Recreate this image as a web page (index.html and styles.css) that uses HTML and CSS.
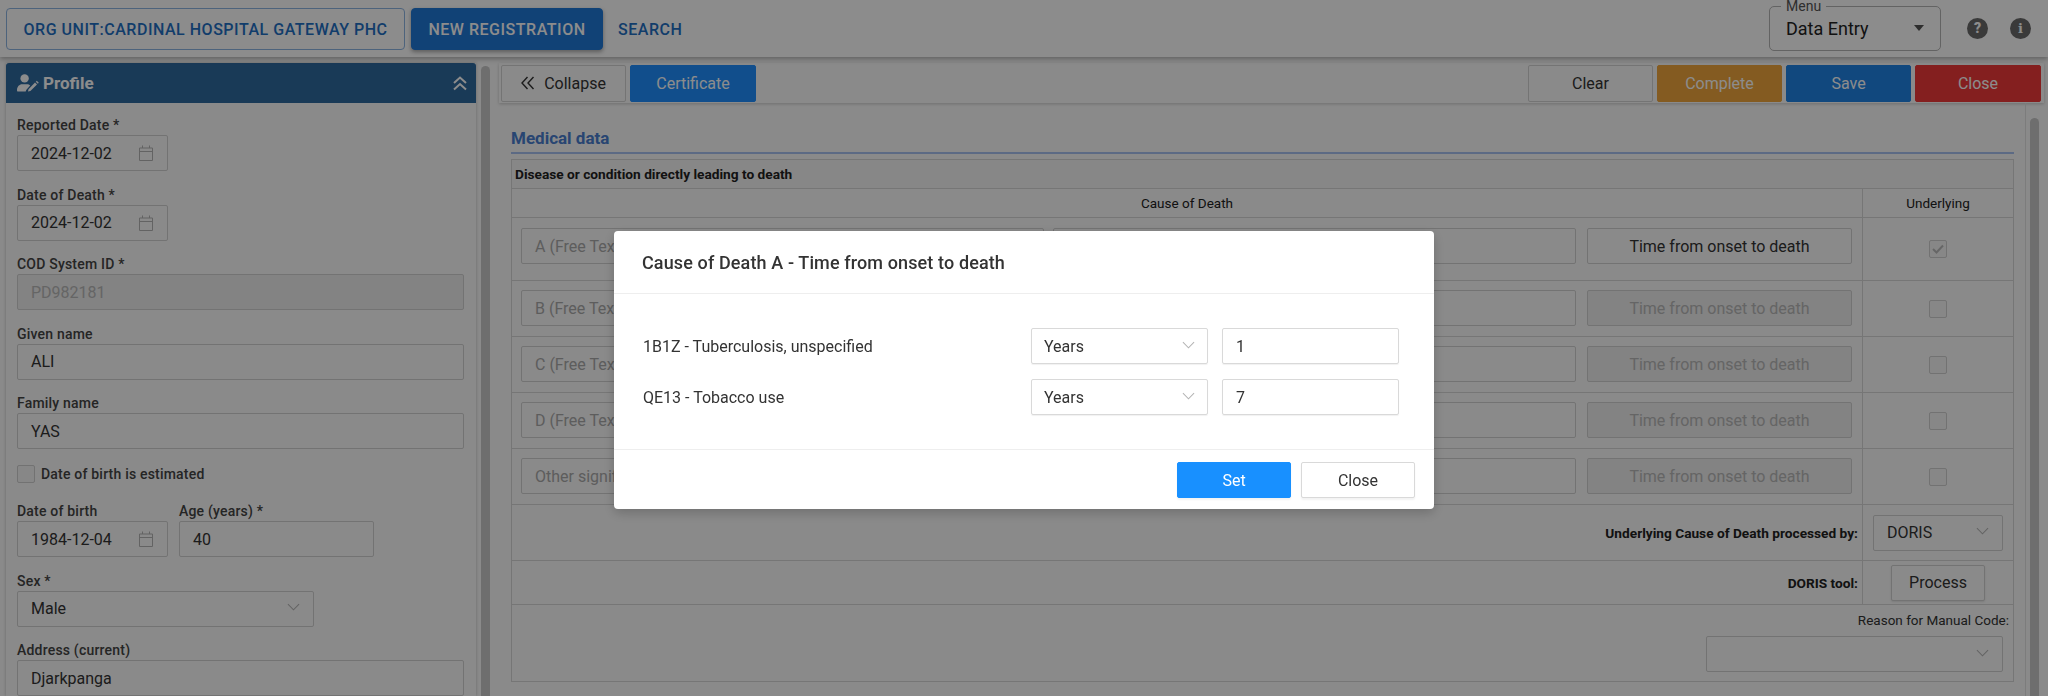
FILE: index.html
```html
<!DOCTYPE html>
<html lang="en">
<head>
  <meta charset="UTF-8">
  <title>Data Entry</title>
  <link rel="stylesheet" href="styles.css">
</head>
<body>
  <svg class="defs" width="0" height="0">
    <symbol id="cal" viewBox="0 0 14 16"><path d="M.5 3h13v12.5H.5zM.5 6.5h13M3.5 .5V3M10.5 .5V3" fill="none" stroke="currentColor"/></symbol>
    <symbol id="chev" viewBox="0 0 14 8"><path d="M1 1l6 6 6-6" fill="none" stroke="currentColor" stroke-width="1.1"/></symbol>
  </svg>

  <div class="app">
    <header class="topbar">
      <button class="nav-btn org">ORG UNIT:CARDINAL HOSPITAL GATEWAY PHC</button>
      <button class="nav-btn active">NEW REGISTRATION</button>
      <button class="nav-btn plain">SEARCH</button>
      <div class="topbar-right">
        <fieldset class="menu">
          <legend>Menu</legend>
          <span>Data Entry</span>
          <i class="caret"></i>
        </fieldset>
        <span class="round-icon">?</span>
        <span class="round-icon info">i</span>
      </div>
    </header>

    <div class="main">
      <aside class="sidebar">
        <div class="panel-head">
          <svg class="user-icon" width="22" height="18" viewBox="0 0 22 18">
            <circle cx="7.6" cy="4.4" r="4.2" fill="currentColor"/>
            <path d="M1 17.6c-1 0-1-1-1-1.6 0-3.400 2.500-5.800 5-5.800h5c1.300 0 2.400 .5 3.200 1.200l-4 4.600-.5 1.600z" fill="currentColor"/>
            <path d="M11 17.600l.5-2.400 6.500-6.700 2 2-6.600 6.600zM18.800 7.700l1-1 2 2-1 1z" fill="currentColor"/>
          </svg>
          <span class="panel-title">Profile</span>
          <svg class="dbl-up" width="14" height="15" viewBox="0 0 14 15"><path d="M1 7l6-5.500L13 7M1 13.500L7 8l6 5.500" fill="none" stroke="currentColor" stroke-width="2"/></svg>
        </div>
        <div class="form">
          <div class="group">
            <label>Reported Date *</label>
            <div class="field date"><span>2024-12-02</span><svg class="cal"><use href="#cal"/></svg></div>
          </div>
          <div class="group">
            <label>Date of Death *</label>
            <div class="field date"><span>2024-12-02</span><svg class="cal"><use href="#cal"/></svg></div>
          </div>
          <div class="group">
            <label>COD System ID *</label>
            <div class="field disabled"><span>PD982181</span></div>
          </div>
          <div class="group">
            <label>Given name</label>
            <div class="field"><span>ALI</span></div>
          </div>
          <div class="group">
            <label>Family name</label>
            <div class="field"><span>YAS</span></div>
          </div>
          <div class="check-row"><i class="check"></i><label>Date of birth is estimated</label></div>
          <div class="pair">
            <div class="group">
              <label>Date of birth</label>
              <div class="field date"><span>1984-12-04</span><svg class="cal"><use href="#cal"/></svg></div>
            </div>
            <div class="group age">
              <label>Age (years) *</label>
              <div class="field"><span>40</span></div>
            </div>
          </div>
          <div class="group sex">
            <label>Sex *</label>
            <div class="field select"><span>Male</span><svg class="chev"><use href="#chev"/></svg></div>
          </div>
          <div class="group">
            <label>Address (current)</label>
            <div class="field"><span>Djarkpanga</span></div>
          </div>
        </div>
      </aside>
      <div class="scroll-left"><i></i></div>

      <section class="content">
        <div class="toolbar">
          <button class="tool"><svg width="14" height="14" viewBox="0 0 14 14"><path d="M6.500 1L1 7l5.500 6M12.500 1L7 7l5.500 6" fill="none" stroke="currentColor" stroke-width="1.400"/></svg>Collapse</button>
          <button class="tool cert">Certificate</button>
          <span class="spacer"></span>
          <button class="tool">Clear</button>
          <button class="tool complete">Complete</button>
          <button class="tool save">Save</button>
          <button class="tool close">Close</button>
        </div>
        <div class="content-body">
          <div class="sheet">
            <h3 class="section-title">Medical data</h3>
            <table class="cod">
              <colgroup><col><col class="col-under"></colgroup>
              <tr class="r-head"><td colspan="2" class="strong">Disease or condition directly leading to death</td></tr>
              <tr class="r-cols"><td class="center">Cause of Death</td><td class="center">Underlying</td></tr>
              <tr class="r-a">
                <td><div class="cod-line"><div class="field free"><span>A (Free Text)</span></div><div class="field icd"></div><button class="time">Time from onset to death</button></div></td>
                <td class="center"><i class="check checked"><svg width="12" height="10" viewBox="0 0 12 10"><path d="M1 5l3.500 3.500L11 1.500" fill="none" stroke="currentColor" stroke-width="2"/></svg></i></td>
              </tr>
              <tr class="r-b">
                <td><div class="cod-line"><div class="field free"><span>B (Free Text)</span></div><div class="field icd"></div><button class="time off">Time from onset to death</button></div></td>
                <td class="center"><i class="check"></i></td>
              </tr>
              <tr class="r-b">
                <td><div class="cod-line"><div class="field free"><span>C (Free Text)</span></div><div class="field icd"></div><button class="time off">Time from onset to death</button></div></td>
                <td class="center"><i class="check"></i></td>
              </tr>
              <tr class="r-b">
                <td><div class="cod-line"><div class="field free"><span>D (Free Text)</span></div><div class="field icd"></div><button class="time off">Time from onset to death</button></div></td>
                <td class="center"><i class="check"></i></td>
              </tr>
              <tr class="r-b">
                <td><div class="cod-line"><div class="field free"><span>Other significant</span></div><div class="field icd"></div><button class="time off">Time from onset to death</button></div></td>
                <td class="center"><i class="check"></i></td>
              </tr>
              <tr class="r-under">
                <td class="strong right">Underlying Cause of Death processed by:</td>
                <td class="center"><div class="field select doris"><span>DORIS</span><svg class="chev"><use href="#chev"/></svg></div></td>
              </tr>
              <tr class="r-doris">
                <td class="strong right">DORIS tool:</td>
                <td class="center"><button class="process">Process</button></td>
              </tr>
              <tr class="r-reason">
                <td colspan="2" class="right">
                  <div class="reason-label">Reason for Manual Code:</div>
                  <div class="field select reason"><svg class="chev"><use href="#chev"/></svg></div>
                </td>
              </tr>
            </table>
          </div>
          <div class="scroll-right"><i></i></div>
        </div>
      </section>
    </div>
  </div>

  <div class="mask">
    <div class="modal">
      <div class="modal-head">Cause of Death A - Time from onset to death</div>
      <div class="modal-body">
        <div class="onset-row">
          <span class="onset-name">1B1Z - Tuberculosis, unspecified</span>
          <div class="m-field m-select"><span>Years</span><svg class="chev"><use href="#chev"/></svg></div>
          <div class="m-field m-num"><span>1</span></div>
        </div>
        <div class="onset-row">
          <span class="onset-name">QE13 - Tobacco use</span>
          <div class="m-field m-select"><span>Years</span><svg class="chev"><use href="#chev"/></svg></div>
          <div class="m-field m-num"><span>7</span></div>
        </div>
      </div>
      <div class="modal-foot">
        <button class="m-btn primary">Set</button>
        <button class="m-btn">Close</button>
      </div>
    </div>
  </div>
</body>
</html>
```

FILE: styles.css
```css
* {
  box-sizing: border-box;
}
html, body {
  margin: 0;
  height: 696px;
  overflow: hidden;
}
body {
  font-family: Roboto, "Liberation Sans", sans-serif;
  font-size: 16px;
  color: #222;
  background: #fbfbfb;
}
button {
  font-family: inherit;
  cursor: pointer;
}
.defs {
  position: absolute;
}
.app {
  height: 696px;
  display: flex;
  flex-direction: column;
}

/* top bar */
.topbar {
  height: 57px;
  flex: none;
  display: flex;
  align-items: flex-start;
  padding: 8px 0 0 6px;
  background: #fff;
  box-shadow: 0 2px 5px rgba(0, 0, 0, .3);
  position: relative;
}
.nav-btn {
  height: 42px;
  border: 1px solid #8db4e2;
  border-radius: 4px;
  background: transparent;
  color: #1f6fc4;
  font-size: 16px;
  font-weight: 500;
  letter-spacing: .52px;
  padding: 0;
  margin-right: 6px;
}
.org {
  width: 399px;
}
.active {
  width: 192px;
  background: #1f78d8;
  border-color: #1f78d8;
  color: #fff;
  box-shadow: 0 2px 4px rgba(0, 0, 0, .35);
}
.plain {
  border: 0;
  padding: 0 9px;
}
.topbar-right {
  margin-left: auto;
  display: flex;
  align-items: flex-start;
}
.menu {
  width: 172px;
  height: 51px;
  margin: -8px 0 0;
  padding: 0 0 0 16px;
  border: 1px solid #b4b4b4;
  border-radius: 5px;
  display: flex;
  align-items: center;
  font-size: 18px;
}
.menu legend {
  font-size: 14px;
  line-height: 12px;
  padding: 0 5px;
  margin-left: -5px;
  color: #555;
}
.menu span {
  margin-top: -5px;
}
.caret {
  margin-left: auto;
  margin-right: 16px;
  margin-top: -6px;
  border-left: 5.500px solid transparent;
  border-right: 5.500px solid transparent;
  border-top: 6px solid #555;
}
.round-icon {
  width: 21px;
  height: 21px;
  border-radius: 50%;
  background: #6a6a6a;
  color: #fff;
  font-size: 14px;
  font-weight: 900;
  line-height: 21px;
  text-align: center;
  margin: 10px 0 0 26px;
}
.info {
  margin: 10px 17px 0 22px;
  font-family: "DejaVu Serif", serif;
  font-size: 13px;
}

/* layout under the bar */
.main {
  flex: 1;
  min-height: 0;
  display: flex;
  padding-top: 6px;
}
.sidebar {
  width: 470px;
  margin-left: 6px;
  flex: none;
  overflow: hidden;
  background: #fbfbfb;
  box-shadow: 0 0 3px rgba(0, 0, 0, .25);
}
.panel-head {
  height: 40px;
  background: #2f6a9f;
  color: #fff;
  border-radius: 3px 3px 0 0;
  display: flex;
  align-items: center;
  padding: 0 9px 0 11px;
}
.user-icon {
  flex: none;
}
.panel-title {
  font-size: 17px;
  font-weight: 700;
  margin-left: 4px;
}
.dbl-up {
  margin-left: auto;
}
.form {
  padding: 12px 12px 0 11px;
}
.group {
  margin-bottom: 13.500px;
}
.group label, .check-row label {
  display: block;
  font-size: 14px;
  font-weight: 500;
  letter-spacing: .2px;
  line-height: 20px;
  color: #444;
}
.field {
  height: 36px;
  border: 1px solid #d2d2d2;
  border-radius: 2px;
  background: #fbfbfb;
  display: flex;
  align-items: center;
  padding: 0 13px;
  color: #333;
}
.date {
  width: 151px;
  justify-content: space-between;
  padding-right: 14px;
}
.cal {
  width: 14px;
  height: 16px;
  color: #b4b4b4;
  flex: none;
}
.disabled {
  background: #eeeeee;
  color: #b8b8b8;
}
.check-row {
  display: flex;
  align-items: center;
  height: 18px;
  margin: 16px 0 18px;
}
.check-row label {
  margin-left: 6px;
}
.check {
  display: inline-flex;
  align-items: center;
  justify-content: center;
  width: 18px;
  height: 18px;
  border: 1px solid #cfcfcf;
  border-radius: 2px;
  background: #f6f6f6;
  vertical-align: middle;
}
.checked {
  color: #bbb;
}
.pair {
  display: flex;
  gap: 11px;
}
.age {
  width: 195px;
}
.sex {
  width: 297px;
}
.select {
  justify-content: space-between;
  padding-right: 13px;
}
.chev {
  width: 13px;
  height: 8px;
  color: #b4b4b4;
  flex: none;
  margin-top: -3px;
}

/* left scrollbar */
.scroll-left {
  width: 23px;
  flex: none;
  padding: 3px 0 0 5px;
}
.scroll-left i {
  display: block;
  width: 9px;
  height: 100%;
  background: #c8c8c8;
  border-radius: 5px 5px 0 0;
}

/* right side */
.content {
  flex: 1;
  min-width: 0;
  display: flex;
  flex-direction: column;
}
.toolbar {
  height: 40px;
  flex: none;
  display: flex;
  gap: 4px;
  align-items: center;
  padding: 0 3px 0 2px;
  margin-right: 4px;
  box-shadow: 0 1px 3px rgba(0, 0, 0, .2);
  background: #fbfbfb;
}
.spacer {
  flex: 1;
}
.tool {
  width: 125px;
  height: 37px;
  border: 1px solid #d4d4d4;
  border-radius: 2px;
  background: #fbfbfb;
  color: #333;
  font-size: 16px;
  display: flex;
  align-items: center;
  justify-content: center;
  gap: 9px;
  padding: 0;
}
.cert {
  border-color: #1f8fff;
  background: #1f8fff;
  color: #fff;
  width: 126px;
}
.complete {
  background: #f0a63c;
  border-color: #f0a63c;
  color: #fff;
}
.save {
  background: #1f84e6;
  border-color: #1f84e6;
  color: #fff;
}
.close {
  width: 126px;
  background: #f03a3a;
  border-color: #f03a3a;
  color: #fff;
}
.content-body {
  flex: 1;
  min-height: 0;
  display: flex;
  overflow: hidden;
}
.sheet {
  width: 1515px;
  flex: none;
  padding: 25px 0 0 12px;
}
.section-title {
  margin: 0 0 5px;
  height: 26px;
  border-bottom: 2px solid #a8c2f0;
  color: #4a7fd0;
  font-size: 17px;
  font-weight: 700;
  line-height: 20px;
}
.cod {
  width: 1503px;
  table-layout: fixed;
  border-collapse: collapse;
  border: 1px solid #d4d4d4;
  font-size: 13.500px;
}
.cod td {
  border: 1px solid #d8d8d8;
  padding: 0;
}
.col-under {
  width: 151px;
}
.r-head {
  height: 29px;
  background: #f6f6f6;
}
.r-cols {
  height: 29px;
}
.r-a {
  height: 63px;
}
.r-b {
  height: 56px;
}
.r-under {
  height: 56px;
}
.r-doris {
  height: 44px;
}
.r-reason {
  height: 77px;
}
.strong {
  font-weight: 700;
  font-size: 13.700px;
  color: #222;
  padding: 0 4px 0 3px !important;
}
.center {
  text-align: center;
}
.right {
  text-align: right;
}
.cod-line {
  display: flex;
  align-items: center;
  padding: 0 9px;
  gap: 9px;
  font-size: 16px;
  margin-top: -6px;
}
.r-b .cod-line {
  margin-top: -1px;
}
.free {
  width: 523px;
  color: #aaa;
  text-align: left;
  white-space: nowrap;
}
.icd {
  width: 523px;
}
.time {
  width: 265px;
  height: 36px;
  margin-left: 2px;
  border: 1px solid #d2d2d2;
  border-radius: 2px;
  background: #fbfbfb;
  color: #333;
  font-size: 16px;
}
.off {
  background: #eeeeee;
  color: #b8b8b8;
}
.doris {
  width: 130px;
  margin: 0 auto;
  font-size: 16px;
  text-align: left;
}
.process {
  width: 94px;
  height: 36px;
  border: 1px solid #d2d2d2;
  border-radius: 2px;
  background: #fbfbfb;
  color: #333;
  font-size: 16px;
  box-shadow: 0 1px 2px rgba(0, 0, 0, .1);
}
.r-reason td {
  vertical-align: top;
  padding: 7px 4px 0 0;
}
.reason-label {
  line-height: 16px;
  margin-bottom: 8px;
  color: #333;
}
.reason {
  width: 297px;
  margin: 0 6px 0 auto;
  justify-content: flex-end;
}

/* scrollbar of the sheet */
.scroll-right {
  flex: none;
  width: 23px;
  margin-left: 11px;
  padding: 15px 0 0 4px;
  border-left: 1px solid #e2e2e2;
}
.scroll-right i {
  display: block;
  width: 9px;
  height: 100%;
  background: #c8c8c8;
  border-radius: 5px 5px 0 0;
}

/* modal */
.mask {
  position: fixed;
  inset: 0;
  z-index: 10;
  background: rgba(0, 0, 0, .45);
  display: flex;
  justify-content: center;
  align-items: flex-start;
  padding-top: 231px;
}
.modal {
  width: 820px;
  height: 278px;
  background: #fff;
  border-radius: 4px;
  box-shadow: 0 4px 12px rgba(0, 0, 0, .2);
  display: flex;
  flex-direction: column;
}
.modal-head {
  height: 63px;
  flex: none;
  border-bottom: 1px solid #eee;
  padding: 0 28px;
  display: flex;
  align-items: center;
  font-size: 18px;
  font-weight: 500;
  letter-spacing: .12px;
  color: #333;
}
.modal-body {
  flex: 1;
  padding: 34px 35px 0 29px;
}
.onset-row {
  display: flex;
  align-items: center;
  height: 36px;
  margin-bottom: 15px;
  gap: 14px;
}
.onset-name {
  flex: 1;
  color: #333;
}
.m-field {
  height: 36px;
  border: 1px solid #d9d9d9;
  border-radius: 2px;
  display: flex;
  align-items: center;
  padding: 0 12px;
  color: #333;
  box-shadow: 0 1px 1px rgba(0, 0, 0, .06);
}
.m-select {
  width: 177px;
  justify-content: space-between;
}
.m-num {
  width: 177px;
  padding-left: 13px;
}
.modal-foot {
  height: 60px;
  flex: none;
  border-top: 1px solid #eee;
  display: flex;
  justify-content: flex-end;
  gap: 10px;
  padding: 12px 19px 0 0;
}
.m-btn {
  width: 114px;
  height: 36px;
  border: 1px solid #d9d9d9;
  border-radius: 2px;
  background: #fff;
  color: #333;
  font-size: 16px;
  box-shadow: 0 2px 2px rgba(0, 0, 0, .05);
}
.primary {
  background: #1890ff;
  border-color: #1890ff;
  color: #fff;
}
```
